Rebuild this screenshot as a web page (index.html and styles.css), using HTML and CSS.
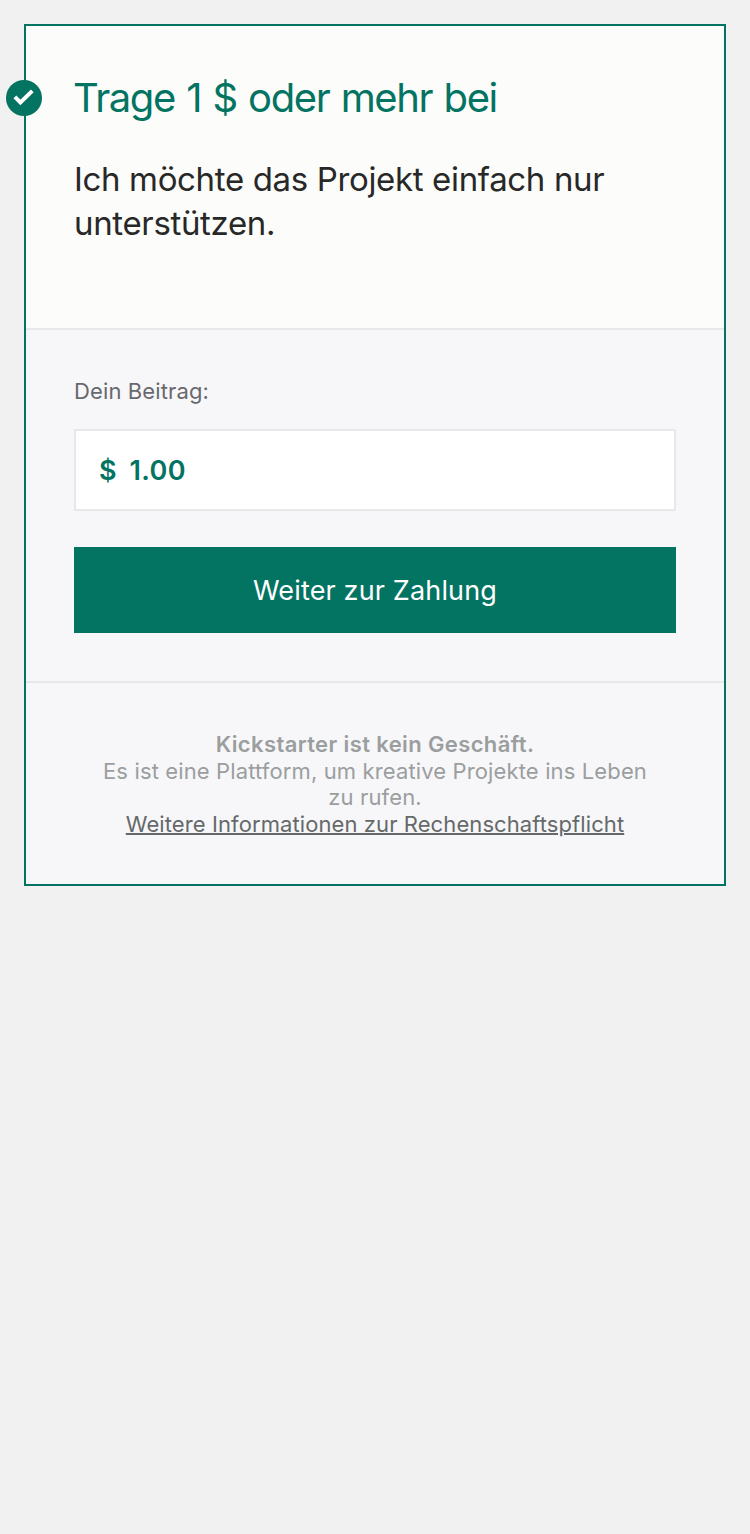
FILE: index.html
```html
<!DOCTYPE html>
<html lang="de">
<head>
<meta charset="utf-8">
<title>Unterstützen</title>
<link rel="stylesheet" href="styles.css">
</head>
<body>
<main class="card">
  <section class="intro">
    <svg class="badge" viewBox="0 0 36 36" aria-hidden="true"><circle cx="18" cy="18" r="18" fill="#037362"/><path d="M8.9 16.8l5.5 5.7L26.3 10.9" fill="none" stroke="#fff" stroke-width="4"/></svg>
    <h1 class="title">Trage 1 $ oder mehr bei</h1>
    <p class="description">Ich möchte das Projekt einfach nur<br>unterstützen.</p>
  </section>
  <section class="pledge">
    <label class="label" for="amount">Dein Beitrag:</label>
    <div class="field" id="amount"><span class="currency">$</span><span class="amount">1.00</span></div>
    <button class="submit">Weiter zur Zahlung</button>
  </section>
  <footer class="note">
    <strong class="note-title">Kickstarter ist kein Geschäft.</strong><br>
    Es ist eine Plattform, um kreative Projekte ins Leben<br>
    zu rufen.<br>
    <a class="link" href="#">Weitere Informationen zur Rechenschaftspflicht</a>
  </footer>
</main>
</body>
</html>
```
FILE: styles.css
```css
* { box-sizing: border-box; }
body { margin: 0; padding: 24px; background: #f1f1f1; font-family: Inter, "Liberation Sans", sans-serif; min-height: 1534px; }
.card { height: 862px; border: 2px solid #037362; background: #f7f7fa; display: flex; flex-direction: column; }
.intro { position: relative; height: 304px; padding: 46px 48px 0; background: #fcfcfa; border-bottom: 2px solid #e8e8e8; }
.badge { position: absolute; left: -20px; top: 54px; width: 36px; height: 36px; }
.title { margin: 0 0 0 -1px; font-size: 40px; line-height: 52px; font-weight: 400; color: #037362; white-space: nowrap; letter-spacing: -1.4px; word-spacing: 1.5px; }
.description { margin: 33px 0 0; font-size: 33px; line-height: 44px; color: #282828; white-space: nowrap; letter-spacing: -.35px; }
.pledge { height: 353px; padding: 47px 48px 0; border-bottom: 2px solid #e8e8e8; display: flex; flex-direction: column; }
.label { font-size: 22px; line-height: 28px; color: #68686d; letter-spacing: .12px; margin-bottom: 24px; }
.field { height: 82px; border: 2px solid #e8e8e8; background: #fff; display: flex; align-items: center; gap: 12.5px; padding-left: 23px; font-size: 27px; font-weight: 600; letter-spacing: .4px; color: #037362; }
.submit { height: 86px; margin-top: 36px; border: 0; padding: 0; background: #037362; color: #fff; font: 400 27px Inter, sans-serif; letter-spacing: .15px; }
.note { padding: 48px 48px 0; text-align: center; font-size: 22px; line-height: 26.7px; color: #9b9e9e; letter-spacing: .13px; white-space: nowrap; }
.note-title { font-weight: 600; letter-spacing: .38px; }
.link { color: #656969; text-decoration: underline; text-decoration-thickness: 2px; text-underline-offset: 1px; letter-spacing: .09px; }
```
